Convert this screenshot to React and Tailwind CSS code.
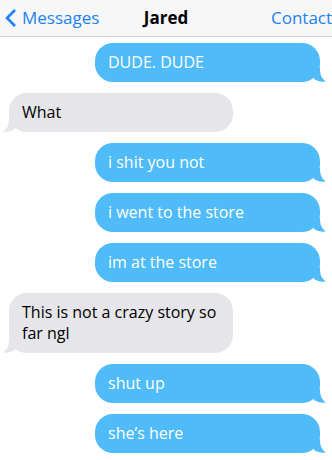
import React from 'react';

const messages = [
  { from: 'me', text: 'DUDE. DUDE' },
  { from: 'them', text: 'What' },
  { from: 'me', text: 'i shit you not' },
  { from: 'me', text: 'i went to the store' },
  { from: 'me', text: 'im at the store' },
  { from: 'them', text: 'This is not a crazy story so far ngl' },
  { from: 'me', text: 'shut up' },
  { from: 'me', text: 'she\u2019s here' },
];

function Bubble({ from, text }) {
  const mine = from === 'me';
  return (
    <div
      className={
        mine
          ? 'relative self-end mr-[12px] w-[225px] rounded-[18px] bg-[#4fbbf8] px-[13px] py-[9px] text-[16px] leading-[21px] text-white'
          : 'relative self-start ml-[9px] w-[224px] rounded-[18px] bg-[#e5e5ea] px-[13px] py-[9px] text-[16px] leading-[21px] text-black'
      }
    >
      {text}
      {mine ? (
        <svg className="absolute right-[-6px] bottom-0" width="14" height="14" viewBox="0 0 14 14">
          <path d="M0 0 L8 0 C8 6 9 10 14 13.5 C9 14 5 13 2 11 Z" fill="#4fbbf8" />
        </svg>
      ) : (
        <svg className="absolute left-[-6px] bottom-0" width="14" height="14" viewBox="0 0 14 14">
          <path d="M14 0 L6 0 C6 6 5 10 0 13.5 C5 14 9 13 12 11 Z" fill="#e5e5ea" />
        </svg>
      )}
    </div>
  );
}

export default function App() {
  return (
    <div className="h-[460px] w-[332px] overflow-hidden bg-white font-['Open_Sans',sans-serif]">
      {/* top bar */}
      <div className="flex h-[37px] items-center border-b border-[#d2d2d2] bg-[#f7f7f7] text-[17px]">
        <div className="flex w-[110px] items-center pl-[5px] text-[#1d82f1]">
          <svg width="12" height="20" viewBox="0 0 12 20" className="mr-[5px]">
            <path d="M10 2 L2 10 L10 18" fill="none" stroke="#1d82f1" strokeWidth="2.6" />
          </svg>
          Messages
        </div>
        <div className="flex-1 text-center font-bold text-black">Jared</div>
        <div className="w-[110px] whitespace-nowrap pl-[49px] text-[#1d82f1]">Contact</div>
      </div>

      <div className="flex flex-col gap-[11px] pt-[6px]">
        {messages.map((m, i) => (
          <Bubble key={i} from={m.from} text={m.text} />
        ))}
      </div>
    </div>
  );
}
